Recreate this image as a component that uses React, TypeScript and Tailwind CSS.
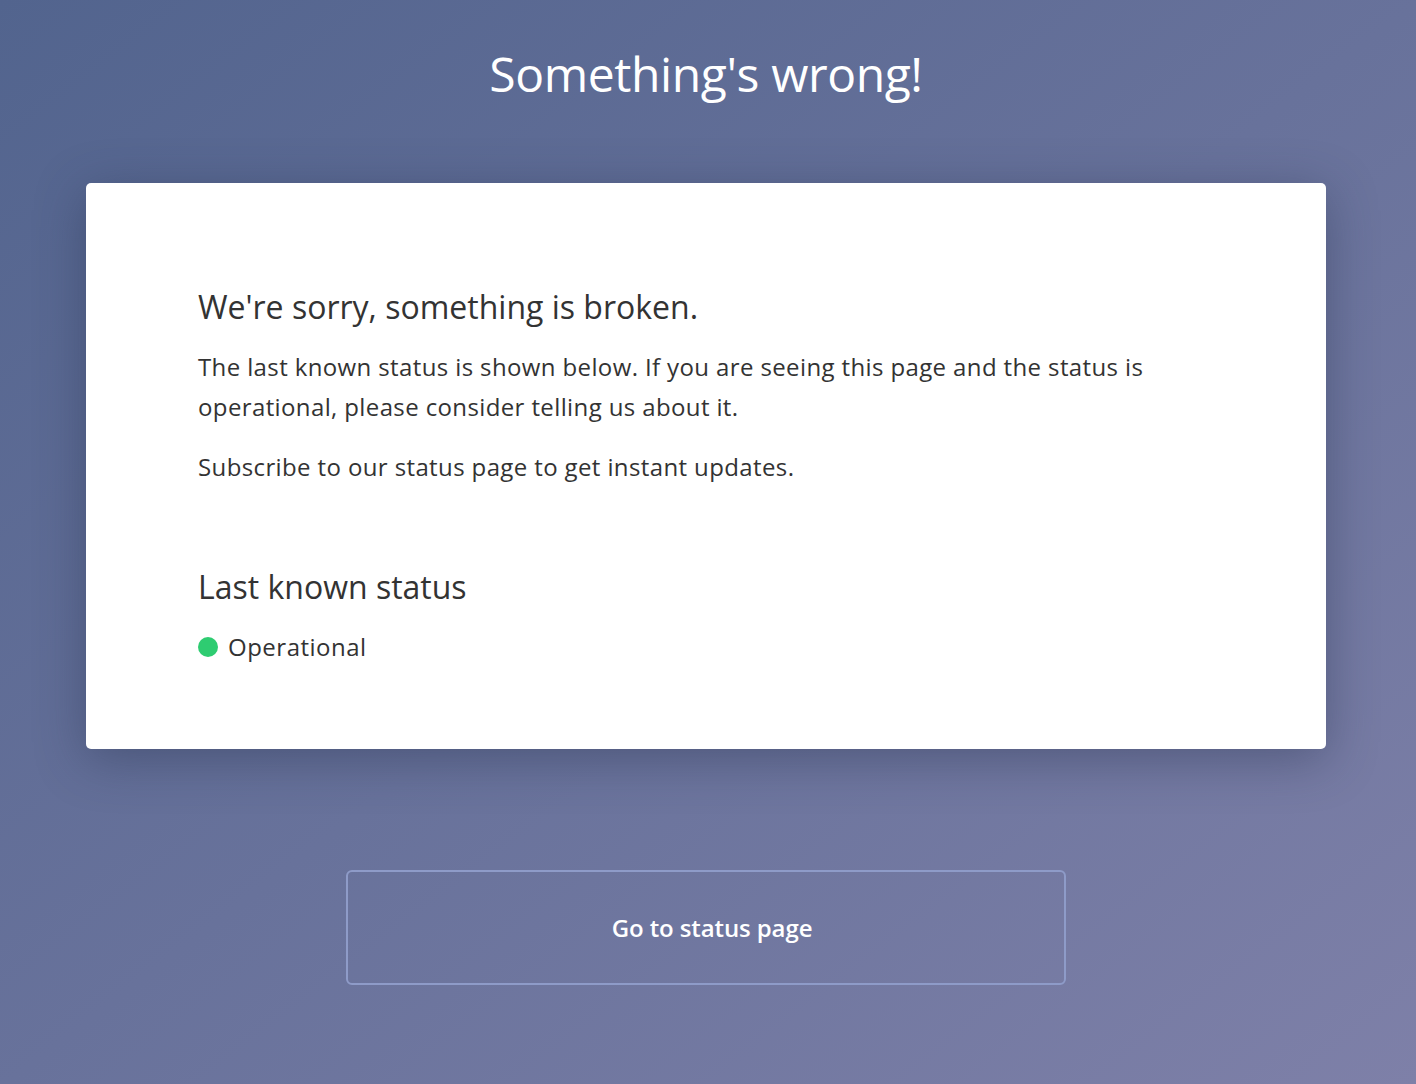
import React from 'react';

const font = { fontFamily: '"Open Sans", Lato, sans-serif' };

export default function App() {
    return (
        <div
            className="min-h-[1084px] w-full flex flex-col items-center pr-[4px] bg-gradient-to-br from-[#52648e] to-[#7e80a8] text-[#333]"
            style={font}
        >
            {/* Title */}
            <h1 className="mt-[44px] text-[48px] leading-[60px] font-normal text-white tracking-[-0.4px]">
                Something's wrong!
            </h1>

            {/* Card */}
            <div className="mt-[79px] w-[1240px] h-[566px] bg-white rounded-[5px] shadow-[0_10px_50px_rgba(40,50,80,0.45)] pl-[112px] pr-[112px] pt-[104px]">
                <h2 className="text-[32px] leading-[40px] font-normal text-[#333]">
                    We're sorry, something is broken.
                </h2>
                <p className="mt-[20px] text-[24px] leading-[40px] text-[#333] tracking-[0.38px]">
                    The last known status is shown below. If you are seeing this page and the status is operational, please consider telling us about it.
                </p>
                <p className="mt-[20px] text-[24px] leading-[40px] text-[#333] tracking-[0.38px]">
                    Subscribe to our status page to get instant updates.
                </p>

                <h3 className="mt-[80px] text-[32px] leading-[40px] font-normal text-[#333]">
                    Last known status
                </h3>
                <div className="mt-[20px] flex items-center gap-[10px]">
                    <span className="w-[20px] h-[20px] rounded-full bg-[#2ecc71]" />
                    <span className="text-[24px] leading-[40px] tracking-[0.5px]">Operational</span>
                </div>
            </div>

            {/* Button */}
            <button className="mt-[121px] w-[720px] h-[115px] pl-[12px] rounded-[6px] border-2 border-[#8e9bc8] bg-transparent text-white text-[24px] font-semibold tracking-[-0.1px] flex items-center justify-center">
                Go to status page
            </button>
        </div>
    );
}
